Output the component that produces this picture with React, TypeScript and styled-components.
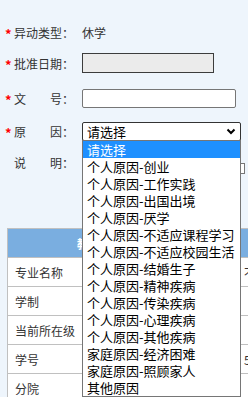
import React from 'react'
import styled, { createGlobalStyle } from 'styled-components'

const GlobalStyle = createGlobalStyle`
  html, body {
    margin: 0;
    padding: 0;
    background: #eef5fc;
    overflow: hidden;
  }
  body {
    font-family: "Noto Sans CJK SC", "Noto Sans", sans-serif;
    font-size: 12px;
    color: #333;
  }
`

const Page = styled.div`
  width: 248px;
  height: 397px;
  overflow: hidden;
  position: relative;
`

const Form = styled.div`
  display: flex;
  flex-direction: column;
  padding-top: 20px;
`

const Row = styled.div<{ $gap?: number }>`
  display: flex;
  align-items: center;
  height: 24px;
  margin-top: ${({ $gap }) => $gap ?? 0}px;
`

const LabelCell = styled.div`
  width: 82px;
  flex: none;
  display: flex;
  align-items: center;
  padding-left: 5px;
  box-sizing: border-box;
  white-space: nowrap;
  font-size: 12px;
`

const Star = styled.span<{ $hidden?: boolean }>`
  color: #f00;
  width: 9px;
  font-size: 13px;
  font-weight: bold;
  line-height: 1;
  padding-top: 3px;
  visibility: ${({ $hidden }) => ($hidden ? 'hidden' : 'visible')};
`

const LabelText = styled.span`
  display: flex;
  justify-content: space-between;
  width: 48px;
`

const Colon = styled.span`
  width: 12px;
`

const Value = styled.span`
  color: #333;
  font-size: 12px;
`

const DateBox = styled.div`
  width: 132px;
  height: 20px;
  box-sizing: border-box;
  background: #ebebeb;
  border: 1px solid #3c3c3c;
`

const TextBox = styled.div`
  width: 154px;
  height: 19px;
  box-sizing: border-box;
  background: #fff;
  border: 1px solid #767676;
  border-radius: 2px;
`

const NoteBox = styled.div`
  width: 163px;
  height: 11px;
  margin-top: 12px;
  box-sizing: border-box;
  background: #fff;
  border: 1px solid #767676;
`

const SelectWrap = styled.div`
  position: relative;
  width: 159px;
  height: 19px;
`

const SelectBox = styled.div`
  height: 19px;
  box-sizing: border-box;
  background: #fff;
  border: 1px solid #333;
  border-radius: 2px;
  display: flex;
  align-items: center;
  justify-content: space-between;
  padding: 0 4px 0 4px;
  color: #000;
  font-size: 13px;
  line-height: 1;
`

const DropList = styled.ul`
  position: absolute;
  top: 18px;
  left: 0;
  width: 159px;
  box-sizing: border-box;
  margin: 0;
  padding: 0;
  list-style: none;
  background: #fff;
  border: 1px solid #767676;
  z-index: 10;
`

const Option = styled.li<{ $active?: boolean }>`
  height: 17px;
  line-height: 17px;
  padding-left: 4px;
  font-size: 13px;
  white-space: nowrap;
  color: ${({ $active }) => ($active ? '#fff' : '#000')};
  background: ${({ $active }) => ($active ? '#1e90ff' : '#fff')};
`

const TableWrap = styled.div`
  margin-top: 54px;
  padding-left: 7px;
`

const Table = styled.table`
  border-collapse: collapse;
  width: 420px;
  background: #fff;
  table-layout: fixed;
`

const HeadCell = styled.th`
  height: 28px;
  padding: 0 0 0 69px;
  text-align: left;
  background: #7aaee0;
  color: #fff;
  font-weight: bold;
  font-size: 12px;
  border: 1px solid #c0c0c0;
`

const Cell = styled.td`
  height: 28px;
  padding: 0 7px;
  border: 1px solid #c0c0c0;
  font-size: 12px;
  color: #333;
  white-space: nowrap;
  overflow: hidden;
`

const Chevron = () => (
  <svg width="10" height="7" viewBox="0 0 10 7">
    <path d="M1.5 1.5 L5 5 L8.5 1.5" fill="none" stroke="#000" strokeWidth="2" />
  </svg>
)

const options = [
  '请选择',
  '个人原因-创业',
  '个人原因-工作实践',
  '个人原因-出国出境',
  '个人原因-厌学',
  '个人原因-不适应课程学习',
  '个人原因-不适应校园生活',
  '个人原因-结婚生子',
  '个人原因-精神疾病',
  '个人原因-传染疾病',
  '个人原因-心理疾病',
  '个人原因-其他疾病',
  '家庭原因-经济困难',
  '家庭原因-照顾家人',
  '其他原因',
]

const rows = [
  ['专业名称', '', '不详'],
  ['学制', '', ''],
  ['当前所在级', '', ''],
  ['学号', '', '5'],
  ['分院', '', ''],
]

function Label({ text, spread, star = true }: { text: string; spread?: boolean; star?: boolean }) {
  return (
    <LabelCell>
      <Star $hidden={!star}>*</Star>
      <LabelText>
        {spread ? text.split('').map((c) => <span key={c}>{c}</span>) : text}
      </LabelText>
      <Colon>：</Colon>
    </LabelCell>
  )
}

export default function App() {
  return (
    <Page>
      <GlobalStyle />
      <Form>
        <Row>
          <Label text="异动类型" />
          <Value>休学</Value>
        </Row>
        <Row $gap={7}>
          <Label text="批准日期" />
          <DateBox />
        </Row>
        <Row $gap={11}>
          <Label text="文号" spread />
          <TextBox />
        </Row>
        <Row $gap={9}>
          <Label text="原因" spread />
          <SelectWrap>
            <SelectBox>
              <span>请选择</span>
              <Chevron />
            </SelectBox>
            <DropList>
              {options.map((o, i) => (
                <Option key={o} $active={i === 0}>
                  {o}
                </Option>
              ))}
            </DropList>
          </SelectWrap>
        </Row>
        <Row $gap={7}>
          <Label text="说明" spread star={false} />
          <NoteBox />
        </Row>
      </Form>
      <TableWrap>
        <Table>
          <colgroup>
            <col style={{ width: 75 }} />
            <col style={{ width: 154 }} />
            <col />
          </colgroup>
          <thead>
            <tr>
              <HeadCell colSpan={3}>教务信息</HeadCell>
            </tr>
          </thead>
          <tbody>
            {rows.map((r) => (
              <tr key={r[0]}>
                <Cell>{r[0]}</Cell>
                <Cell>{r[1]}</Cell>
                <Cell>{r[2]}</Cell>
              </tr>
            ))}
          </tbody>
        </Table>
      </TableWrap>
    </Page>
  )
}
